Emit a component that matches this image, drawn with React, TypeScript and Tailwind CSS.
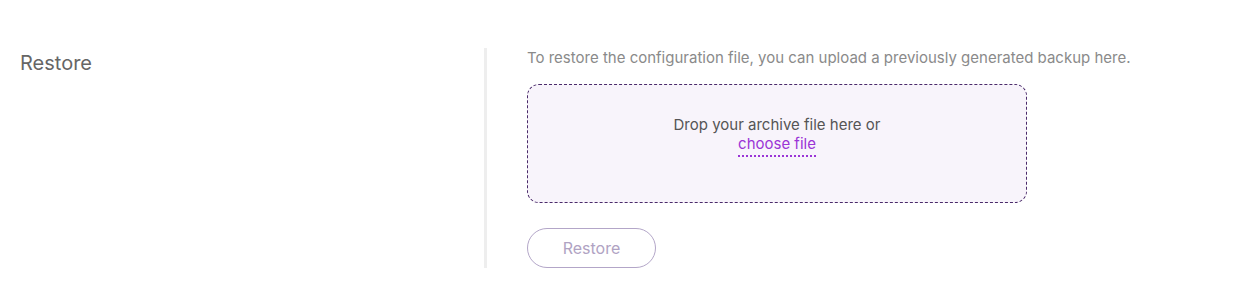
import React from "react";

export default function App() {
  return (
    <div className="w-[1255px] h-[298px] bg-white" style={{ fontFamily: "Inter, 'Noto Sans', sans-serif" }}>
      <div className="flex pt-[48px]">
        <div className="w-[484px] pl-5">
          <h2 className="text-[20px] leading-[30px] text-[#666666] font-normal">Restore</h2>
        </div>
        <div className="border-l-[3px] border-[#eeeeee] pl-[40px] h-[220px]">
          <p className="text-[15px] leading-[20px] text-[#8a8a8a]">
            To restore the configuration file, you can upload a previously generated backup here.
          </p>
          <div className="mt-4 w-[500px] h-[119px] rounded-[12px] border border-dashed border-[#4a2a6a] bg-[#f8f4fb] flex flex-col items-center pt-[30px]">
            <span className="text-[15px] leading-[19px] text-[#555555]">Drop your archive file here or</span>
            <span className="text-[15px] leading-[19px] text-[#9b35d6] border-b-2 border-dotted border-[#9b35d6] pb-[2px] cursor-pointer">
              choose file
            </span>
          </div>
          <button className="mt-[25px] w-[129px] h-[40px] rounded-full border border-[#b3a6c8] text-[16px] text-[#b0a3c3] bg-white">
            Restore
          </button>
        </div>
      </div>
    </div>
  );
}
